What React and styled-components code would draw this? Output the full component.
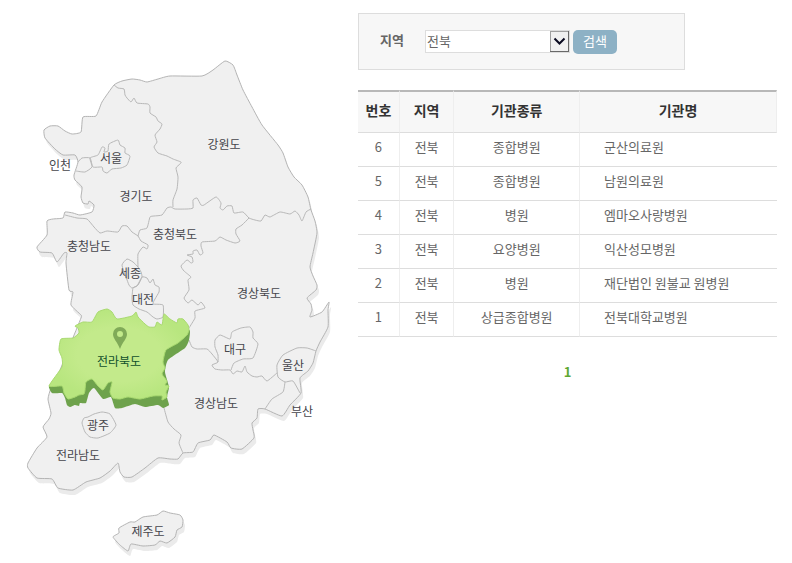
import { useState } from "react";
import styled, { createGlobalStyle } from "styled-components";

const hospitals = [
  { no: 6, area: "전북", type: "종합병원", name: "군산의료원" },
  { no: 5, area: "전북", type: "종합병원", name: "남원의료원" },
  { no: 4, area: "전북", type: "병원", name: "엠마오사랑병원" },
  { no: 3, area: "전북", type: "요양병원", name: "익산성모병원" },
  { no: 2, area: "전북", type: "병원", name: "재단법인 원불교 원병원" },
  { no: 1, area: "전북", type: "상급종합병원", name: "전북대학교병원" },
];

const areas = ["전북", "서울", "경기", "강원", "충북", "충남", "전남", "경북", "경남", "제주"];

const mainland =
  "114,85 122,81 132,79 140,80 147,82 158,79 170,76 202,76 213,70 225,61 233,65 237,75 243,90 252,107 262,125 278,145 283,153 288,167 294,177 302,185 308,197 311,210 315,221 317,233 313,253 310,267 313,276 317,285 316,290 307,298 311,304 312,310 310,317 322,312 329,302 328,310 328,327 320,342 316,351 313,363 308,371 300,378 301,393 290,405 282,416 265,409 258,409 257,418 252,423 253,430 254,438 242,449 231,448 227,442 214,435 210,440 198,443 193,452 183,453 178,459 170,459 158,458 145,468 132,477 124,477 120,472 118,463 110,471 100,478 86,482 73,490 58,488 52,479 37,478 28,468 28,463 37,448 47,437 43,427 49,419 51,413 48,399 51,388 58,375 70,345 81,318 81,315 71,305 73,292 69,290 66,263 67,253 64,253 57,262 52,253 40,252 37,247 47,235 47,221 53,219 63,218 65,212 73,213 80,215 92,212 94,205 89,201 88,204 83,203 81,197 82,187 75,180 74,175 78,162 75,155 63,155 55,149 45,138 44,130 50,126 58,126 65,131 72,134 81,132 83,117 96,116 102,102";

const jeju =
  "113,537 119,533 119,528 130,522 135,522 143,517 157,515 163,511 170,513 180,515 183,520 182,527 177,530 175,537 167,543 160,541 155,545 143,546 131,544 128,551 120,545";

const jeonbukTop =
  "49,386 62,367 62,358 59,350 61,339 73,338 79,333 78,328 75,326 83,322 92,322 98,312 107,309 112,312 117,319 132,316 136,312 138,317 145,324 149,327 155,327 157,322 162,325 164,314 170,319 177,323 178,319 183,319 188,325 189,330 187,335 178,343 166,350 163,362 165,368 162,374 167,381 165,385 169,386 166,392 167,397 162,400 162,396 153,396 140,399 128,397 120,399 113,398 110,392 112,382 108,383 103,390 98,386 92,379 86,382 85,390 84,394 79,395 75,397 68,399 64,393 62,386";

const jeonbukSide =
  "49,386 63,385 80,370 165,350 189,330 189,340 185,348 168,360 165,372 169,387 167,397 169,405 163,408 158,405 145,407 135,404 122,408 115,408 111,397 103,399 94,388 89,393 86,403 80,403 79,406 75,405 70,407 67,405 65,398 62,393 52,393";

// provincial borders drawn as open lines
const borders = [
  "114,85 118,88 124,89 125,95 127,98 131,102 134,98 137,103 148,104 150,107 150,113 156,117 158,121 162,124 160,129 155,135 157,142 154,147 158,153 167,156 173,159 181,162 180,164 176,168 178,177 177,189 173,200 173,207",
  "138,236 140,230 147,228 150,217 154,216 162,215 167,208 171,207 175,209 187,209 193,208 193,200 197,198 201,205 204,205 216,197 221,203 220,208 223,210 227,206 232,206 234,213 243,212 249,218 255,220 261,221 265,215 270,217 280,212 290,214 295,211 299,215 302,221 306,212 311,209",
  "249,218 242,225 236,229 236,234 240,241 235,243 226,240 220,237 215,241 202,242 201,246 203,253 200,255 197,250 193,251 193,254 187,255 192,257 193,262 191,263 187,260 181,266 184,271 191,277 188,280 189,290 184,298 188,303 192,300 198,305 201,302 205,308 195,311 195,318 189,328",
  "189,340 192,347 197,349 207,349 212,354 218,362 212,365 215,369 222,370 230,370 233,374 237,371 242,372 245,366 247,372 252,376 257,377 262,376 267,381 277,373",
  "218,362 218,355 215,347 215,340 220,335 230,339 232,332 241,328 250,327 253,332 253,338 258,344 253,358 243,359 234,363 231,370",
  "316,351 307,348 297,348 283,355 277,365 278,377 285,382 293,381 300,393",
  "285,382 283,392 272,399 265,409",
  "164,408 168,422 174,429 181,435 179,443 183,453",
  "65,215 77,218 87,219 94,227 100,233 107,231 118,232 122,226 127,226 132,232 138,236 141,241 148,245 147,249 143,247 138,254 138,267",
  "78,162 82,158 90,158 92,167 85,172 76,171",
];

const cities = [
  "90,158 98,155 102,147 105,148 104,152 108,151 109,144 118,140 120,145 125,148 125,153 130,156 127,165 121,168 112,169 107,173 103,171 102,167 93,167",
  "138,267 133,262 127,259 122,265 126,277 129,285 132,288 138,285 142,277 141,272",
  "133,288 132,298 133,305 139,309 147,312 153,317 157,319 163,317 163,305 153,304 155,299 159,292 159,287 155,285 153,279 150,283 147,278 142,277 137,286",
  "82,423 84,418 88,417 94,414 102,412 110,414 116,425 110,433 98,438 90,437 85,432",
];

const labels = [
  { text: "강원도", x: 224, y: 149 },
  { text: "서울", x: 111, y: 163 },
  { text: "인천", x: 60, y: 170 },
  { text: "경기도", x: 136, y: 201 },
  { text: "충청북도", x: 175, y: 239 },
  { text: "충청남도", x: 89, y: 251 },
  { text: "세종", x: 130, y: 278 },
  { text: "대전", x: 143, y: 304 },
  { text: "경상북도", x: 259, y: 298 },
  { text: "대구", x: 235, y: 354 },
  { text: "전라북도", x: 119, y: 366, active: true },
  { text: "울산", x: 293, y: 370 },
  { text: "경상남도", x: 216, y: 408 },
  { text: "부산", x: 302, y: 416 },
  { text: "광주", x: 98, y: 430 },
  { text: "전라남도", x: 78, y: 460 },
  { text: "제주도", x: 148, y: 536 },
];

// turns a list of points into a softly curved path
const curve = (list, closed) => {
  const p = list.split(" ").map((pair) => pair.split(",").map(Number));
  const n = p.length;
  const at = (i) => (closed ? p[(i + n) % n] : p[Math.max(0, Math.min(n - 1, i))]);
  let d = `M${p[0]}`;
  for (let i = 0; i < (closed ? n : n - 1); i++) {
    const [a, b, c, e] = [at(i - 1), at(i), at(i + 1), at(i + 2)];
    d += `C${b[0] + (c[0] - a[0]) / 12},${b[1] + (c[1] - a[1]) / 12} ${c[0] - (e[0] - b[0]) / 12},${c[1] - (e[1] - b[1]) / 12} ${c}`;
  }
  return closed ? d + "Z" : d;
};

const KoreaMap = () => (
  <MapSvg viewBox="14 13 332 545" role="img" aria-label="지역 지도">
    <defs>
      <radialGradient id="jeonbuk">
        <stop offset="0.6" stopColor="#c3ea8b" />
        <stop offset="1" stopColor="#b8e67f" />
      </radialGradient>
    </defs>
    <g fill="#ebebeb" transform="translate(2 5)">
      <path d={curve(mainland, true)} />
      <path d={curve(jeju, true)} />
    </g>
    <Land d={curve(mainland, true)} />
    <Land d={curve(jeju, true)} />
    {borders.map((line) => <Border key={line} d={curve(line)} />)}
    {cities.map((line) => <Border key={line} d={curve(line, true)} />)}
    <path d={curve(jeonbukSide, true)} fill="#6ea24c" />
    <path d={curve(jeonbukTop, true)} fill="url(#jeonbuk)" stroke="#a9da70" strokeWidth="1" />
    <path
      d="M120 327a7 7 0 0 0-7 7c0 5 4 7 7 15 3-8 7-10 7-15a7 7 0 0 0-7-7Zm0 4a3 3 0 1 1 0 6 3 3 0 0 1 0-6Z"
      fill="#80aa58"
      fillRule="evenodd"
    />
    {labels.map(({ text, x, y, active }) => (
      <MapLabel key={text} x={x} y={y} $active={active}>{text}</MapLabel>
    ))}
  </MapSvg>
);

const App = () => {
  const [area, setArea] = useState("전북");

  return (
    <Page>
      <GlobalStyle />
      <KoreaMap />
      <Content>
        <SearchBox onSubmit={(ev) => ev.preventDefault()}>
          <Label htmlFor="area">지역</Label>
          <SelectWrap>
            <Select id="area" value={area} onChange={(ev) => setArea(ev.target.value)}>
              {areas.map((item) => <option key={item}>{item}</option>)}
            </Select>
            <Arrow viewBox="0 0 19 21" aria-hidden="true">
              <path d="M0 0h19v21H0z" fill="#696969" />
              <path d="M0 0h18v20H0z" fill="#a0a0a0" />
              <path d="M1 1h17v19H1z" fill="#f0f0f0" />
              <path d="M4.500 7.500 9.500 12.500 14.500 7.500" fill="none" stroke="#0a0a20" strokeWidth="2" />
            </Arrow>
          </SelectWrap>
          <Button type="submit">검색</Button>
        </SearchBox>
        <Table>
          <colgroup>
            <Col $width="10%" />
            <Col $width="13%" />
            <Col $width="30%" />
            <Col $width="47%" />
          </colgroup>
          <thead>
            <tr>
              <Th>번호</Th>
              <Th>지역</Th>
              <Th>기관종류</Th>
              <Th>기관명</Th>
            </tr>
          </thead>
          <tbody>
            {hospitals.map((row) => (
              <tr key={row.no}>
                <Td>{row.no}</Td>
                <Td>{row.area}</Td>
                <Td>{row.type}</Td>
                <Td $left>{row.name}</Td>
              </tr>
            ))}
          </tbody>
        </Table>
        <Paging aria-label="페이지">
          <PageLink href="#1" aria-current="page">1</PageLink>
        </Paging>
      </Content>
    </Page>
  );
};

const GlobalStyle = createGlobalStyle`
  * {
    box-sizing: border-box;
  }
  body {
    margin: 0;
    background: #fff;
    color: #666;
    font: 13px/20px "Noto Sans CJK KR", sans-serif;
  }
`;

const Page = styled.div`
  display: flex;
  align-items: flex-start;
  gap: 12px;
  padding: 13px 15px 0 14px;
`;

const MapSvg = styled.svg`
  flex: none;
  width: 332px;
`;

const Land = styled.path`
  fill: #f0f0f0;
  stroke: #b4b4b4;
  stroke-width: 1;
`;

const Border = styled.path`
  fill: none;
  stroke: #b8b8b8;
  stroke-width: 1;
`;

const MapLabel = styled.text`
  fill: ${({ $active }) => ($active ? "#10502c" : "#46464c")};
  font-size: 12px;
  text-anchor: middle;
`;

const Content = styled.main`
  flex: 1;
  min-width: 0;
`;

const SearchBox = styled.form`
  display: flex;
  align-items: center;
  width: 78%;
  height: 57px;
  padding-left: 21px;
  background: #f7f7f7;
  border: 1px solid #ddd;
`;

const Label = styled.label`
  width: 45px;
  padding-bottom: 4px;
  font-weight: 700;
`;

const SelectWrap = styled.div`
  position: relative;
  width: 145px;
  margin-right: 3px;
`;

const Select = styled.select`
  display: block;
  width: 100%;
  height: 23px;
  padding: 0 20px 2px 1px;
  appearance: none;
  background: #fff;
  border: 1px solid #ddd;
  border-radius: 0;
  color: #666;
  font: inherit;
  line-height: 20px;
`;

const Arrow = styled.svg`
  position: absolute;
  top: 1px;
  right: 1px;
  width: 19px;
  height: 21px;
  pointer-events: none;
`;

const Button = styled.button`
  width: 44px;
  height: 24px;
  padding: 0 0 2px;
  background: #8db1c5;
  border: 0;
  border-radius: 5px;
  color: #fff;
  font: inherit;
`;

const Table = styled.table`
  width: 100%;
  margin-top: 20px;
  border-spacing: 0;
  table-layout: fixed;
`;

const Col = styled.col`
  width: ${({ $width }) => $width};
`;

const Th = styled.th`
  height: 43px;
  padding: 0 0 4px;
  background: #f7f7f7;
  border-top: 2px solid #b8b8b8;
  border-right: 1px solid #eee;
  border-bottom: 1px solid #ddd;
  color: #333;
  font-size: 14px;
`;

const Td = styled.td`
  height: 34px;
  padding: 0 0 6px ${({ $left }) => ($left ? "24px" : "0")};
  border-right: 1px solid #eee;
  border-bottom: 1px solid #ddd;
  text-align: ${({ $left }) => ($left ? "left" : "center")};
  &:last-child {
    border-right: 0;
  }
`;

const Paging = styled.nav`
  margin-top: 25px;
  text-align: center;
`;

const PageLink = styled.a`
  color: #5fa832;
  font-weight: 700;
  text-decoration: none;
`;

export default App;
